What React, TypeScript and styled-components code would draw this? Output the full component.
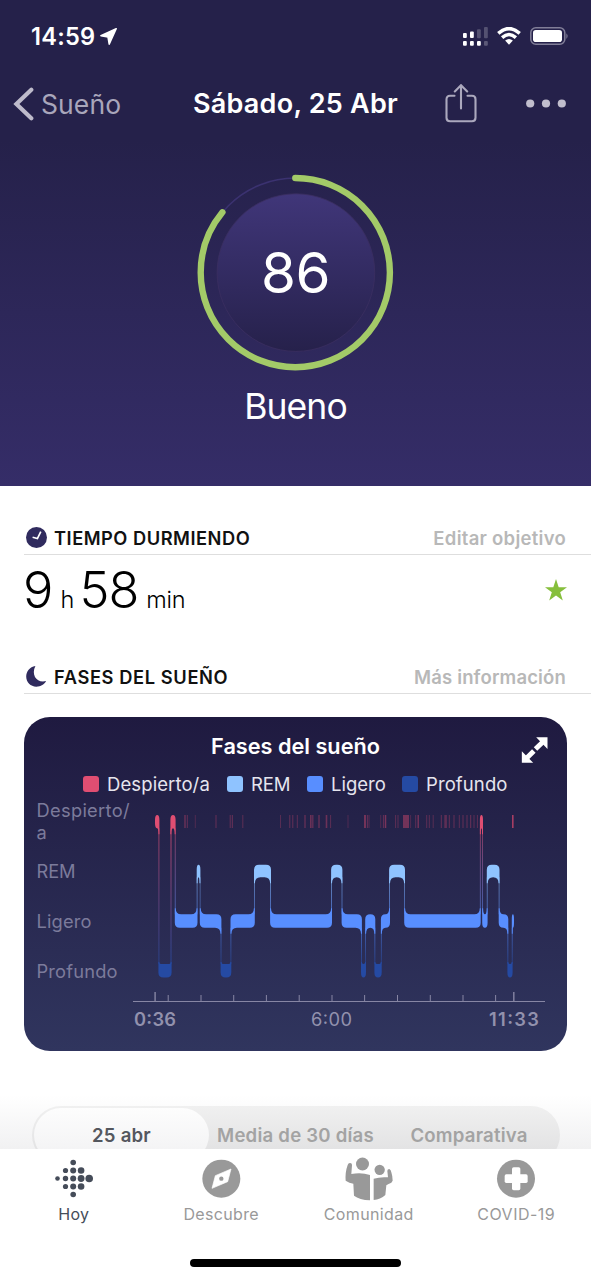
import React from "react";
import styled, { createGlobalStyle } from "styled-components";

const Global = createGlobalStyle`
  * { box-sizing: border-box; }
  body { margin: 0; background: #fff; font-family: Inter, "Liberation Sans", sans-serif; }
  svg { display: block; flex: none; }
`;

const Screen = styled.div`
  width: 591px;
  height: 1280px;
  display: flex;
  flex-direction: column;
  overflow: hidden;
  background: #fff;
`;

const Hero = styled.header`
  height: 486px;
  flex: none;
  display: flex;
  flex-direction: column;
  align-items: stretch;
  color: #fff;
  background: linear-gradient(#25214a 0, #25214a 140px, #352d68 486px);
`;

const StatusBar = styled.div`
  height: 72px;
  display: flex;
  align-items: center;
  padding: 0 22px 0 31px;
`;

const Clock = styled.span`
  width: 69px;
  font-size: 23.6px;
  font-weight: 600;
  letter-spacing: 0.25px;
`;

const StatusIcons = styled.div`
  display: flex;
  align-items: center;
  gap: 9px;
  margin-left: auto;
`;

const NavBar = styled.nav`
  height: 64px;
  display: grid;
  grid-template-columns: 1fr auto 1fr;
  align-items: center;
  padding: 0 25px 0 13px;
`;

const Back = styled.div`
  display: flex;
  align-items: center;
  gap: 7px;
  color: #a9a6bb;
  font-size: 26.5px;
  line-height: 32px;
  letter-spacing: 0.1px;
`;

const NavTitle = styled.h1`
  margin: 0 0 0 12px;
  font-size: 27px;
  line-height: 32px;
  font-weight: 600;
  letter-spacing: 0.25px;
`;

const NavActions = styled.div`
  display: flex;
  align-items: center;
  justify-content: flex-end;
  gap: 49px;
`;

const Score = styled.div`
  display: grid;
  place-items: center;
  width: 200px;
  height: 200px;
  margin: 37px auto 0;
  & > * { grid-area: 1 / 1; }
`;

const ScoreValue = styled.span`
  font-size: 56.5px;
  line-height: 60px;
  letter-spacing: -0.6px;
`;

const Rating = styled.div`
  margin-top: 10px;
  text-align: center;
  font-size: 35.5px;
  line-height: 48px;
  letter-spacing: -0.9px;
`;

const SectionHead = styled.div<{ $top: number }>`
  margin: ${(p) => p.$top}px 0 0 24px;
  height: 34px;
  flex: none;
  display: flex;
  align-items: center;
  padding: 0 25px 0 2px;
  border-bottom: 1px solid #dedede;
`;

const SectionTitle = styled.h2<{ $track: number }>`
  margin: 0 auto 0 7px;
  padding-top: 1px;
  font-size: 18.3px;
  line-height: 22px;
  font-weight: 600;
  color: #111;
  letter-spacing: ${(p) => p.$track}px;
`;

const SectionLink = styled.span<{ $track: number }>`
  padding-top: 1px;
  font-size: 18.5px;
  line-height: 22px;
  font-weight: 600;
  color: #b8b8b8;
  letter-spacing: ${(p) => p.$track}px;
`;

const Duration = styled.div`
  height: 72px;
  flex: none;
  display: flex;
  align-items: center;
  justify-content: space-between;
  padding: 0 24px 2px 23px;
`;

const DurationText = styled.div`
  display: flex;
  align-items: baseline;
  font-weight: 300;
  color: #000;
`;

const Big = styled.span`
  font-size: 50.5px;
  line-height: 60px;
  letter-spacing: -1px;
`;

const Unit = styled.span`
  font-size: 23.5px;
  letter-spacing: -0.3px;
  margin: 0 5.5px 0 8px;
`;

const Card = styled.section`
  margin: 23px 24px 0;
  height: 334px;
  flex: none;
  border-radius: 26px;
  color: #fff;
  background: linear-gradient(#1f1a40, #30355e);
`;

const CardTop = styled.div`
  display: grid;
  grid-template-columns: 1fr auto 1fr;
  align-items: center;
  height: 54px;
  padding: 9px 19px 0 19px;
`;

const CardTitle = styled.h3`
  grid-column: 2;
  margin: 0;
  padding-bottom: 5px;
  line-height: 40px;
  font-size: 21.7px;
  font-weight: 600;
`;

const CardAction = styled.div`
  display: flex;
  justify-content: flex-end;
  padding-top: 3px;
`;

const Legend = styled.div`
  display: flex;
  height: 26px;
  align-items: center;
  padding-left: 59px;
`;

const LegendItem = styled.div<{ $w: number; $color: string; $track: number }>`
  width: ${(p) => p.$w}px;
  display: flex;
  align-items: center;
  gap: 8px;
  font-size: 18.5px;
  line-height: 22px;
  white-space: nowrap;
  color: #e6e5ee;
  letter-spacing: ${(p) => p.$track}px;
  &::before {
    content: "";
    width: 16px;
    height: 16px;
    border-radius: 3px;
    background: ${(p) => p.$color};
  }
`;

const Below = styled.div`
  flex: 1;
  overflow: hidden;
  margin-top: 44px;
  padding: 11px 31px 0 32px;
  background: linear-gradient(#fff, #f1f1f2);
`;

const Segmented = styled.div`
  height: 58px;
  display: flex;
  border-radius: 29px;
  padding: 2px;
  background: linear-gradient(#f0f0f0, #e3e3e4 43px);
`;

const Segment = styled.div<{ $w: number; $active?: boolean; $track: number }>`
  width: ${(p) => p.$w}px;
  display: flex;
  align-items: center;
  justify-content: center;
  border-radius: 27px;
  font-size: 18.6px;
  font-weight: 600;
  white-space: nowrap;
  letter-spacing: ${(p) => p.$track}px;
  color: ${(p) => (p.$active ? "#54575e" : "#a3a3a3")};
  background: ${(p) => (p.$active ? "linear-gradient(#fdfdfd, #f4f4f5 41px)" : "none")};
`;

const TabBar = styled.footer`
  height: 131px;
  flex: none;
  background: #fff;
`;

const Tabs = styled.div`
  display: grid;
  grid-template-columns: repeat(4, 147.5px);
  height: 110px;
`;

const Tab = styled.div<{ $active?: boolean; $track: number }>`
  display: flex;
  flex-direction: column;
  align-items: center;
  padding-top: 6px;
  font-size: 16px;
  line-height: 22px;
  letter-spacing: ${(p) => p.$track}px;
  color: ${(p) => (p.$active ? "#454c59" : "#999")};
`;

const HomeIndicator = styled.div`
  width: 211px;
  height: 8px;
  border-radius: 4px;
  margin: 0 auto;
  background: #000;
`;

type Stage = "wake" | "rem" | "light" | "deep";
const STAGES: Record<Stage, { top: number; bottom: number; color: string }> = {
  wake: { top: 815, bottom: 828.3, color: "#e04e72" },
  rem: { top: 864.7, bottom: 877.3, color: "#8fc3ff" },
  light: { top: 914.3, bottom: 927.8, color: "#588eff" },
  deep: { top: 964, bottom: 977.5, color: "#254aa3" },
};

const SLEEP: [Stage, number, number][] = [
  ["wake", 155, 159.4],
  ["deep", 158.4, 171.6],
  ["wake", 170.4, 175.6],
  ["light", 174.8, 197.5],
  ["rem", 196.7, 200.4],
  ["light", 199.8, 221.4],
  ["deep", 220.6, 231.3],
  ["light", 230.5, 254.8],
  ["rem", 254, 271],
  ["light", 270.1, 332],
  ["rem", 331.1, 342.4],
  ["light", 341.6, 361.9],
  ["deep", 361, 366],
  ["light", 365.2, 375.3],
  ["deep", 374.4, 381.7],
  ["light", 380.9, 390],
  ["rem", 389.1, 405],
  ["light", 404.2, 480.7],
  ["wake", 479.9, 483],
  ["light", 482.2, 487.6],
  ["rem", 486.8, 499.5],
  ["light", 498.7, 508.3],
  ["deep", 507.4, 512.6],
  ["light", 511.8, 514],
];

const WAKEUPS: [number, number, number][] = [
  [185, 2, 0.35], [187.3, 1, 0.45], [195.3, 1, 0.3], [216, 1, 0.45], [230.2, 1, 0.45],
  [232.3, 1, 0.5], [242.8, 1, 0.4], [280.5, 1, 0.35], [289.8, 1, 0.45], [292.8, 1, 0.45],
  [297.3, 1, 0.4], [305, 1, 0.6], [310.8, 1.6, 0.5], [312.8, 1.3, 0.45], [319, 1.6, 0.4],
  [326.5, 1.6, 0.5], [330.6, 1, 0.4], [348, 1, 0.3], [365, 2, 0.55], [367.4, 1, 0.45],
  [369, 1, 0.35], [380.7, 1, 0.3], [383.4, 1, 0.45], [385.5, 1.5, 0.6], [395.6, 1, 0.4],
  [398, 1, 0.4], [406, 6, 0.55], [410.6, 1, 0.3], [415.7, 1, 0.4], [418.2, 1.3, 0.6],
  [426.7, 1, 0.4], [429.3, 1, 0.4], [433.2, 1, 0.35], [441.3, 1, 0.45], [445.6, 2.6, 0.4],
  [449.3, 1, 0.45], [454, 1, 0.45], [459.3, 1, 0.4], [463, 1, 0.45], [467, 1, 0.45],
  [470.7, 1, 0.5], [474, 1, 0.4], [477.4, 1, 0.4], [512.8, 1.6, 0.9],
];

const HOURS = [168.2, 201, 233.7, 266.4, 299.2, 332, 364.6, 397.5, 430.3, 463, 495.6];

// Outline of one stage block: rounded where it ends, flared where it runs into a neighbour.
function blockPath(i: number) {
  const [stage, l, r] = SLEEP[i];
  const { top: t, bottom: b } = STAGES[stage];
  const half = (r - l) / 2;
  const c = Math.min(5, half);
  const v = 5;
  const k = 0.9;
  const f = Math.max(0, Math.min(stage === "deep" ? 1.5 : 5.5, half - k));
  const e = stage === "deep" ? 2 : 6;
  const dir = (n: number) => {
    if (!SLEEP[n]) return 0;
    return STAGES[SLEEP[n][0]].top < t ? -1 : 1;
  };
  const left = dir(i - 1);
  const right = dir(i + 1);
  let d = left === -1
    ? `M${l} ${t - e}H${l + k}Q${l + k} ${t} ${l + k + f} ${t}`
    : `M${l} ${t + v}Q${l} ${t} ${l + c} ${t}`;
  d += right === -1
    ? `H${r - k - f}Q${r - k} ${t} ${r - k} ${t - e}H${r}`
    : `H${r - c}Q${r} ${t} ${r} ${t + v}`;
  d += right === 1
    ? `V${b + e}H${r - k}Q${r - k} ${b} ${r - k - f} ${b}`
    : `V${b - v}Q${r} ${b} ${r - c} ${b}`;
  d += left === 1
    ? `H${l + k + f}Q${l + k} ${b} ${l + k} ${b + e}H${l}Z`
    : `H${l + c}Q${l} ${b} ${l} ${b - v}Z`;
  return d;
}

const Chart = () => (
  <svg width="543" height="240" viewBox="24 797 543 240" fontFamily="Inter, sans-serif">
    <defs>
      {(["wake-deep", "wake-light", "rem-light", "light-deep"] as const).map((id) => {
        const [a, b] = id.split("-") as Stage[];
        return (
          <linearGradient key={id} id={id} gradientUnits="userSpaceOnUse" x1="0" x2="0" y1={STAGES[a].bottom} y2={STAGES[b].top}>
            <stop offset="0" stopColor={STAGES[a].color} stopOpacity="0.65" />
            <stop offset="1" stopColor={STAGES[b].color} stopOpacity="0.65" />
          </linearGradient>
        );
      })}
    </defs>
    <g fontSize="18.3" fill="#7c7b9b">
      <text x="36.5" y="817" textLength="93">Despierto/</text>
      <text x="36.5" y="839">a</text>
      <text x="36.5" y="878" textLength="39">REM</text>
      <text x="36.5" y="928" textLength="55">Ligero</text>
      <text x="36.5" y="978" textLength="81">Profundo</text>
    </g>
    {WAKEUPS.map(([x, w, o]) => (
      <rect key={x} x={x - w / 2} y="815" width={w} height="13" fill="#d8486e" opacity={o * 0.8} />
    ))}
    {SLEEP.slice(1).map(([stage, x], i) => {
      const [prev, , end] = SLEEP[i];
      const [a, b] = STAGES[prev].top < STAGES[stage].top ? [prev, stage] : [stage, prev];
      const y = STAGES[a].bottom;
      return <rect key={x} x={x} y={y} width={end - x} height={STAGES[b].top - y} fill={`url(#${a}-${b})`} />;
    })}
    {SLEEP.map(([stage, x], i) => (
      <path key={x} d={blockPath(i)} fill={STAGES[stage].color} />
    ))}
    <g fill="#8786a4">
      <rect x="133" y="1001" width="412" height="1" />
      {HOURS.map((x) => <rect key={x} x={x - 0.5} y="995" width="1" height="6" />)}
      <rect x="154.4" y="992" width="1.4" height="9" />
      <rect x="513.1" y="992" width="1.4" height="9" />
    </g>
    <g fontSize="18.3" fill="#9291ad">
      <text x="134" y="1026" fontWeight="600" textLength="42">0:36</text>
      <text x="311" y="1026" textLength="41">6:00</text>
      <text x="489" y="1026" fontWeight="600" textLength="50">11:33</text>
    </g>
  </svg>
);

const DOTS: [number, number, number][] = [
  [4, 20, 2.3], [12, 12, 2.6], [12, 20, 2.7], [12, 28, 2.6],
  [19.7, 4, 2.8], [19.7, 12, 3], [19.7, 20, 3], [19.7, 28, 3], [19.7, 36, 2.8],
  [27.6, 12, 3.3], [27.6, 20, 3.4], [27.6, 28, 3.3], [35.7, 20, 3.8],
];

export default function App() {
  return (
    <Screen>
      <Global />
      <Hero>
        <StatusBar>
          <Clock>14:59</Clock>
          <svg width="17" height="17" viewBox="0 0 17 17"><path d="M16.2.8.9 7.8 8 9.1 9.2 16.2Z" fill="#fff" stroke="#fff" strokeWidth="1.5" strokeLinejoin="round" /></svg>
          <StatusIcons>
            <svg width="25" height="19" viewBox="0 0 25 19" fill="#fff">
              <rect x="0" y="6" width="3.8" height="5" rx="1" /><rect x="7" y="4.5" width="3.8" height="6.5" rx="1" />
              <rect x="14" y="2.3" width="3.8" height="9" rx="1" opacity=".22" /><rect x="21" y="0" width="3.8" height="11.3" rx="1" opacity=".22" />
              <rect x="0" y="14" width="3.8" height="4.7" rx="1" /><rect x="7" y="14" width="3.8" height="4.7" rx="1" />
              <rect x="14" y="14" width="3.8" height="4.7" rx="1" /><rect x="21" y="14" width="3.8" height="4.7" rx="1" opacity=".25" />
            </svg>
            <svg width="24" height="18" viewBox="0 0 24 18" fill="none" stroke="#fff" strokeWidth="3.5">
              <path d="M1.3 6.4Q12-3.2 22.7 6.4" /><path d="M5.1 10.6Q12 4.4 18.9 10.6" />
              <path d="M8.1 13.6Q12 10.4 15.9 13.6L12 17.7Z" fill="#fff" stroke="none" />
            </svg>
            <svg width="39" height="18" viewBox="0 0 39 18">
              <rect x=".8" y=".8" width="34" height="16.4" rx="5" fill="none" stroke="#817e98" strokeWidth="1.5" />
              <rect x="3" y="3" width="29" height="12" rx="2.8" fill="#fff" />
              <path d="M36.4 6.2Q38.8 9 36.4 12Z" fill="#817e98" />
            </svg>
          </StatusIcons>
        </StatusBar>
        <NavBar>
          <Back>
            <svg width="21" height="34" viewBox="0 0 21 34"><path d="M18.3 2.8 3.4 17l14.9 14.2" fill="none" stroke="#bebbcb" strokeWidth="4.2" strokeLinecap="round" /></svg>
            <span>Sueño</span>
          </Back>
          <NavTitle>Sábado, 25 Abr</NavTitle>
          <NavActions>
            <svg width="32" height="40" viewBox="0 0 32 40" fill="none" stroke="#aba8bd" strokeWidth="2.1" strokeLinecap="round">
              <path d="M9.5 11.8H5Q1.5 11.8 1.5 15.3v18.5Q1.5 37.3 5 37.3h22q3.5 0 3.5-3.5V15.3q0-3.5-3.5-3.5h-4.5M16 24.5V1.5M9.8 7.5 16 1.2 22.2 7.5" />
            </svg>
            <svg width="40" height="10" viewBox="0 0 40 10" fill="#c1becd"><circle cx="4.2" cy="4.5" r="4.1" /><circle cx="20" cy="4.5" r="4.1" /><circle cx="35.8" cy="4.5" r="4.1" /></svg>
          </NavActions>
        </NavBar>
        <Score>
          <svg width="200" height="200" viewBox="0 0 200 200">
            <defs><linearGradient id="disc" x2="0" y2="1"><stop stopColor="#403679" /><stop offset="1" stopColor="#26214b" /></linearGradient></defs>
            <circle cx="99.3" cy="99.6" r="94.6" fill="none" stroke="#3b3270" strokeWidth="1.6" />
            <circle cx="99.9" cy="99.6" r="78.8" fill="url(#disc)" stroke="#3b2f61" strokeWidth=".8" />
            <circle cx="99.3" cy="99.6" r="94.6" fill="none" stroke="#a3ca68" strokeWidth="6.4" strokeLinecap="round" pathLength="100" strokeDasharray="86 100" transform="rotate(-90 99.3 99.6)" />
          </svg>
          <ScoreValue>86</ScoreValue>
        </Score>
        <Rating>Bueno</Rating>
      </Hero>

      <SectionHead $top={35}>
        <svg width="21" height="21" viewBox="0 0 21 21"><circle cx="10.5" cy="10.5" r="10.5" fill="#302b5e" /><path d="m14.8 4.6-3.4 7-4.8-1.3" fill="none" stroke="#fff" strokeWidth="1.7" /></svg>
        <SectionTitle $track={0.5}>TIEMPO DURMIENDO</SectionTitle>
        <SectionLink $track={0.27}>Editar objetivo</SectionLink>
      </SectionHead>
      <Duration>
        <DurationText><Big>9</Big><Unit>h</Unit><Big>58</Big><Unit>min</Unit></DurationText>
        <svg width="22" height="22" viewBox="0 0 22 22"><path d="m11 0 2.7 8.2H22l-6.8 5 2.6 8.3L11 16.5l-6.8 5 2.6-8.3-6.8-5h8.3Z" fill="#86bf3c" /></svg>
      </Duration>
      <SectionHead $top={33}>
        <svg width="21" height="21" viewBox="0 0 21 21"><path d="M9.4 0C3.6 1 .2 5.4.2 10.6.2 16.4 4.6 20.7 10.3 20.7c4.5 0 8.2-2.2 9.8-5.6C11.6 17.6 4.6 9.6 9.4 0Z" fill="#302b5e" /></svg>
        <SectionTitle $track={0.6}>FASES DEL SUEÑO</SectionTitle>
        <SectionLink $track={0.15}>Más información</SectionLink>
      </SectionHead>

      <Card>
        <CardTop>
          <CardTitle>Fases del sueño</CardTitle>
          <CardAction>
            <svg width="27" height="26" viewBox="663 82 80 78" fill="#fff" stroke="#fff" strokeWidth="15">
              <path d="m706 118 22-21M701 124l-22 22" />
              <path d="M708 83H742V118ZM665 125V159H699Z" stroke="none" />
            </svg>
          </CardAction>
        </CardTop>
        <Legend>
          <LegendItem $w={144} $color="#e04e72" $track={0.1}>Despierto/a</LegendItem>
          <LegendItem $w={80} $color="#8fc3ff" $track={-0.2}>REM</LegendItem>
          <LegendItem $w={95} $color="#588eff" $track={0}>Ligero</LegendItem>
          <LegendItem $w={110} $color="#254aa3" $track={0.1}>Profundo</LegendItem>
        </Legend>
        <Chart />
      </Card>

      <Below>
        <Segmented>
          <Segment $w={175} $active $track={0.2}>25 abr</Segment>
          <Segment $w={173} $track={0.22}>Media de 30 días</Segment>
          <Segment $w={174} $track={0.2}>Comparativa</Segment>
        </Segmented>
      </Below>

      <TabBar>
        <Tabs>
          <Tab $active $track={0.3}>
            <svg width="40" height="48" viewBox="0.5 -3.5 40 48" fill="#454c59">
              {DOTS.map(([x, y, r]) => <circle key={`${x}-${y}`} cx={x} cy={y} r={r} />)}
            </svg>
            Hoy
          </Tab>
          <Tab $track={0.35}>
            <svg width="40" height="48" viewBox="605 223 120 144"><circle cx="666" cy="294" r="57" fill="#999" /><path d="M695 265 685 303 638 323 648 285Z" fill="#fff" stroke="#fff" strokeWidth="2" strokeLinejoin="round" /><circle cx="666" cy="294" r="6.5" fill="#999" /></svg>
            Descubre
          </Tab>
          <Tab $track={0.35}>
            <svg width="50" height="48" viewBox="160 223 150 144" fill="#999">
              <circle cx="215.5" cy="250" r="19.5" /><circle cx="267" cy="267.5" r="15.5" />
              <path d="M171 253Q173 246 179 247Q185 248 184 254L182 280Q212 274 238 283V359Q206 357 190 345L188 309Q176 307 165 300Q163 275 171 253Z" />
              <path d="M249 294Q268 288 292 290L290 271Q290 265 296 265Q301 267 302 275Q306 287 306 300L302 306Q293 309 287 314L284 343Q269 357 249 358Z" />
            </svg>
            Comunidad
          </Tab>
          <Tab $track={0.5}>
            <svg width="40" height="48" viewBox="616 223 120 144"><circle cx="676" cy="294" r="57" fill="#999" /><rect x="642" y="281" width="69" height="26" rx="5" fill="#fff" /><rect x="664" y="259.5" width="25" height="69" rx="5" fill="#fff" /></svg>
            COVID-19
          </Tab>
        </Tabs>
        <HomeIndicator />
      </TabBar>
    </Screen>
  );
}
